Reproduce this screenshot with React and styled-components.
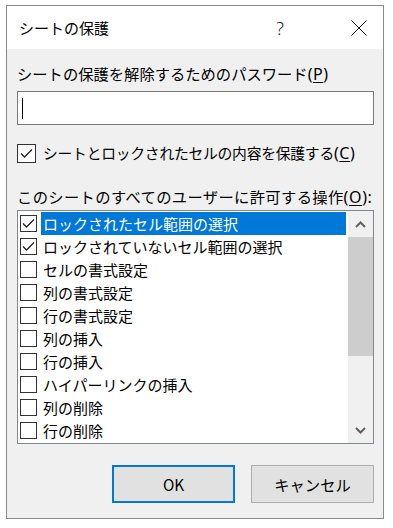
import React from 'react';
import styled, { createGlobalStyle } from 'styled-components';

const GlobalStyle = createGlobalStyle`
body {
  margin: 0;
  background: #ffffff;
  font-family: "Noto Sans CJK JP", "Noto Sans", sans-serif;
}
`;

const Page = styled.div`
padding: 5px 0 0 6px;
`;

const Dialog = styled.div`
width: 376px;
height: 512px;
border: 1px solid #8a8a8a;
background: #f0f0f0;
display: flex;
flex-direction: column;
`;

const TitleBar = styled.div`
height: 43px;
background: #ffffff;
display: flex;
align-items: center;
padding-left: 12px;
`;

const Title = styled.div`
flex: 1;
font-size: 15px;
color: #000;
`;

const HelpButton = styled.div`
width: 36px;
font-size: 18px;
font-weight: 300;
color: #222;
text-align: center;
margin-right: 38px;
font-family: "Noto Sans", sans-serif;
`;

const CloseButton = styled.div`
width: 46px;
height: 43px;
display: flex;
align-items: center;
justify-content: center;
margin-right: 1px;
`;

const Body = styled.div`
flex: 1;
display: flex;
flex-direction: column;
padding: 14px 9px 13px 10px;
`;

const Label = styled.div`
font-size: 15.3px;
line-height: 20px;
height: 20px;
color: #000;
margin-top: ${p => p.$mt || 0}px;
letter-spacing: ${p => p.$ls || 0}px;
white-space: nowrap;
`;

const Latin = styled.span`
font-family: "Noto Sans", sans-serif;
font-size: 16px;
letter-spacing: 0.6px;
`;

const Key = styled.span`
text-decoration: underline;
text-underline-offset: 2px;
`;

const Input = styled.div`
margin-top: 8px;
height: 32px;
border: 1px solid #7a7a7a;
background: #ffffff;
display: flex;
align-items: center;
padding-left: 4px;
`;

const Caret = styled.div`
width: 1px;
height: 21px;
background: #000;
`;

const CheckRow = styled.div`
margin-top: 18px;
display: flex;
align-items: center;
gap: 7px;
font-size: 14.8px;
letter-spacing: -0.25px;
line-height: 20px;
white-space: nowrap;
`;

const Box = styled.div`
flex: none;
width: ${p => p.$size}px;
height: ${p => p.$size}px;
box-sizing: border-box;
border: 1px solid #333333;
background: #ffffff;
display: flex;
align-items: center;
justify-content: center;
`;

const List = styled.div`
margin-top: 4px;
height: 234px;
box-sizing: border-box;
border: 1px solid #828790;
background: #ffffff;
display: flex;
`;

const Items = styled.div`
flex: 1;
padding: 1px 2px 0 2px;
overflow: hidden;
`;

const Item = styled.div`
height: 23px;
display: flex;
align-items: center;
gap: 4px;
font-size: 15px;
white-space: nowrap;
`;

const ItemText = styled.div`
flex: 1;
height: 23px;
line-height: 23px;
padding-left: 2px;
background: ${p => (p.$selected ? '#0078d7' : 'transparent')};
color: ${p => (p.$selected ? '#ffffff' : '#000000')};
`;

const ScrollBar = styled.div`
width: 25px;
background: #f0f0f0;
display: flex;
flex-direction: column;
`;

const Arrow = styled.div`
height: 26px;
display: flex;
align-items: center;
justify-content: center;
`;

const Thumb = styled.div`
height: 119px;
background: #cdcdcd;
`;

const Track = styled.div`
flex: 1;
`;

const Buttons = styled.div`
margin-top: 21px;
display: flex;
justify-content: flex-end;
gap: 16px;
`;

const Button = styled.div`
width: 123px;
height: 38px;
box-sizing: border-box;
background: #e1e1e1;
border: ${p => (p.$default ? '2px solid #0078d7' : '1px solid #adadad')};
display: flex;
align-items: center;
justify-content: center;
font-size: 15.3px;
color: #000;
`;

const Check = () => (
  <svg width="13" height="11" viewBox="0 0 13 11">
    <polyline points="1,5.5 4.5,9 12,1.5" fill="none" stroke="#222" strokeWidth="1.3" />
  </svg>
);

const Chevron = ({ up }) => (
  <svg width="11" height="7" viewBox="0 0 11 7">
    <polyline
      points={up ? '1,6 5.5,1.5 10,6' : '1,1 5.5,5.5 10,1'}
      fill="none"
      stroke="#606060"
      strokeWidth="2"
    />
  </svg>
);

const items = [
  { label: 'ロックされたセル範囲の選択', checked: true, selected: true },
  { label: 'ロックされていないセル範囲の選択', checked: true },
  { label: 'セルの書式設定' },
  { label: '列の書式設定' },
  { label: '行の書式設定' },
  { label: '列の挿入' },
  { label: '行の挿入' },
  { label: 'ハイパーリンクの挿入' },
  { label: '列の削除' },
  { label: '行の削除' },
];

const App = () => {
  return (
    <Page>
      <GlobalStyle />
      <Dialog>
        <TitleBar>
          <Title>シートの保護</Title>
          <HelpButton>?</HelpButton>
          <CloseButton>
            <svg width="16" height="16" viewBox="0 0 16 16">
              <path d="M0.5 0.5 L15.5 15.5 M15.5 0.5 L0.5 15.5" stroke="#111" strokeWidth="1" />
            </svg>
          </CloseButton>
        </TitleBar>
        <Body>
          <Label>
            シートの保護を解除するためのパスワード<Latin>(<Key>P</Key>)</Latin>
          </Label>
          <Input>
            <Caret />
          </Input>
          <CheckRow>
            <Box $size={19}>
              <Check />
            </Box>
            <span>
              シートとロックされたセルの内容を保護する<Latin>(<Key>C</Key>)</Latin>
            </span>
          </CheckRow>
          <Label $mt={23} $ls={0.35}>
            このシートのすべてのユーザーに許可する操作<Latin>(<Key>O</Key>):</Latin>
          </Label>
          <List>
            <Items>
              {items.map((item, i) => (
                <Item key={i}>
                  <Box $size={17}>{item.checked && <Check />}</Box>
                  <ItemText $selected={item.selected}>{item.label}</ItemText>
                </Item>
              ))}
            </Items>
            <ScrollBar>
              <Arrow>
                <Chevron up />
              </Arrow>
              <Thumb />
              <Track />
              <Arrow>
                <Chevron />
              </Arrow>
            </ScrollBar>
          </List>
          <Buttons>
            <Button $default>OK</Button>
            <Button>キャンセル</Button>
          </Buttons>
        </Body>
      </Dialog>
    </Page>
  );
};

export default App;
